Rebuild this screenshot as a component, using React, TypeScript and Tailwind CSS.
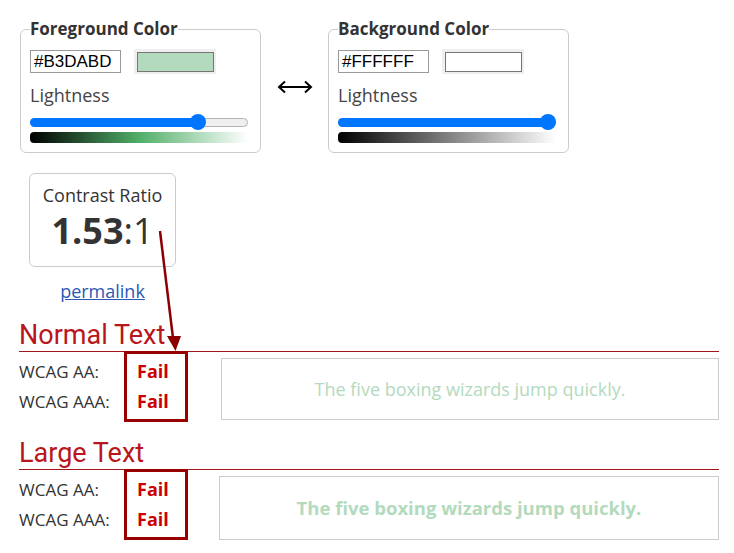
import React from "react"

interface ColorPanelProps {
  title: string
  hex: string
  swatch: string
  thumb: number // percent of the track
  gradient: string
}

const ColorPanel: React.FC<ColorPanelProps> = ({ title, hex, swatch, thumb, gradient }) => {
  return (
    <fieldset className="w-[241px] rounded-[6px] border border-[#cccccc] px-[9px] pb-[9px] pt-[9px] min-w-0">
      <legend className="px-0 text-[17px] font-bold leading-[22px] text-[#333333]">{title}</legend>
      <div className="flex items-center">
        <div className="h-[23px] w-[91px] border border-[#999999] bg-white px-[3px] font-['Liberation_Sans',Arial,sans-serif] text-[17px] leading-[21px] text-black">
          {hex}
        </div>
        <div className="ml-[13px] flex h-[25px] w-[82px] items-center justify-center bg-[#efefef]">
          <div className="h-[20px] w-[77px] border border-[#767676]" style={{ backgroundColor: swatch }} />
        </div>
      </div>
      <div className="mt-[9px] text-[18px] leading-[24px] text-[#444444]">Lightness</div>
      {/* lightness slider */}
      <div className="relative mt-[7px] h-[16px] w-[218px]">
        <div className="absolute left-0 right-0 top-[4px] h-[9px] rounded-full border border-[#b2b2b2] bg-[#efefef]" />
        <div
          className="absolute left-0 top-[4px] h-[9px] rounded-full bg-[#0075ff]"
          style={{ width: `${thumb}%` }}
        />
        <div
          className="absolute top-0 h-[16px] w-[16px] -translate-x-1/2 rounded-full bg-[#0075ff]"
          style={{ left: `${thumb}%` }}
        />
      </div>
      <div className="mt-[2px] h-[11px] w-[218px] rounded-l-[4px]" style={{ background: gradient }} />
    </fieldset>
  )
}

const ResultSection: React.FC<{ title: string; large?: boolean }> = ({ title, large }) => {
  return (
    <div>
      <h2 className="border-b border-[#a0161c] font-['Roboto',sans-serif] text-[27px] leading-[32px] text-[#b8161c]">
        {title}
      </h2>
      <div className="flex">
        <div className="w-[105px] pt-[5px] text-[17px] leading-[30px] text-[#333333]">
          <div>WCAG AA:</div>
          <div>WCAG AAA:</div>
        </div>
        <div className="-mt-px w-[64px] border-[3px] border-[#990000] pb-[3px] pl-[10px] pt-[2px] text-[18px] font-bold leading-[30px] text-[#cc0000]">
          <div>Fail</div>
          <div>Fail</div>
        </div>
        <div
          className={`mt-[6px] flex flex-1 items-center justify-center border border-[#cccccc] text-[#b3dabd] ${
            large ? "ml-[31px] h-[64px] text-[18.5px] font-bold" : "ml-[33px] h-[62px] text-[18px]"
          }`}
        >
          The five boxing wizards jump quickly.
        </div>
      </div>
    </div>
  )
}

export default function App() {
  return (
    <div className="relative min-h-[553px] w-[734px] bg-white pl-[19px] pr-[15px] pt-[18px] font-['Open_Sans',sans-serif]">
      <div className="flex items-start pl-px">
        <ColorPanel
          title="Foreground Color"
          hex="#B3DABD"
          swatch="#B3DABD"
          thumb={77}
          gradient="linear-gradient(to right, #000000, hsl(135 37% 50%), #ffffff)"
        />
        <div className="flex w-[67px] justify-center pt-[62px]">
          <svg width="36" height="14" viewBox="0 0 36 14" fill="none" stroke="#000" strokeWidth="2">
            <path d="M2 7H34" />
            <path d="M8 1.5L2 7L8 12.5" />
            <path d="M28 1.5L34 7L28 12.5" />
          </svg>
        </div>
        <ColorPanel
          title="Background Color"
          hex="#FFFFFF"
          swatch="#FFFFFF"
          thumb={96.5}
          gradient="linear-gradient(to right, #000000, #ffffff)"
        />
      </div>

      <div className="ml-[10px] mt-[20px] w-[147px]">
        <div className="h-[94px] rounded-[6px] border border-[#cccccc] pt-[9px] text-center text-[#333333]">
          <div className="text-[18px] leading-[24px]">Contrast Ratio</div>
          <div className="mt-[2px] text-[36px] leading-[44px]">
            <span className="font-bold">1.53</span>:1
          </div>
        </div>
        <div className="mt-[12px] text-center text-[18px] leading-[24px]">
          <a href="#" className="text-[#2b58b4] underline">
            permalink
          </a>
        </div>
      </div>

      <div className="mt-[16px]">
        <ResultSection title="Normal Text" />
      </div>
      <div className="mt-[15px]">
        <ResultSection title="Large Text" large />
      </div>

      {/* annotation arrow from the ratio to the results */}
      <svg className="pointer-events-none absolute left-0 top-0" width="734" height="553">
        <line x1="160" y1="231" x2="173" y2="338" stroke="#8b0000" strokeWidth="2.5" />
        <polygon points="167,336 181,336 175.5,351" fill="#8b0000" />
      </svg>
    </div>
  )
}
